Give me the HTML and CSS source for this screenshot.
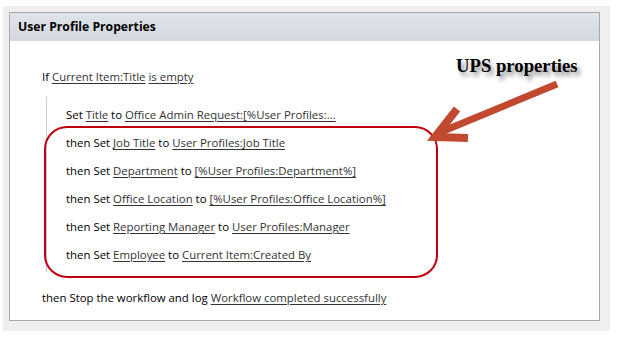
FILE: index.html
```html
<!DOCTYPE html>
<html>
<head>
<meta charset="utf-8">
<link rel="stylesheet" href="styles.css">
</head>
<body>
<div class="frame">
  <div class="panel">
    <div class="header">User Profile Properties</div>
    <div class="content">
      <div class="row">If <a>Current Item:Title</a> <a>is empty</a></div>
      <div class="block">
        <div class="row">Set <a>Title</a> to <a>Office Admin Request:[%User Profiles:...</a></div>
        <div class="row">then Set <a>Job Title</a> to <a>User Profiles:Job Title</a></div>
        <div class="row">then Set <a>Department</a> to <a>[%User Profiles:Department%]</a></div>
        <div class="row">then Set <a>Office Location</a> to <a>[%User Profiles:Office Location%]</a></div>
        <div class="row">then Set <a>Reporting Manager</a> to <a>User Profiles:Manager</a></div>
        <div class="row">then Set <a>Employee</a> to <a>Current Item:Created By</a></div>
      </div>
      <div class="row stop">then Stop the workflow and log <a>Workflow completed successfully</a></div>
    </div>
  </div>
</div>
<svg class="annot" width="617" height="338" viewBox="0 0 617 338">
  <rect x="45" y="127" width="392" height="150" rx="22" ry="22" fill="none" stroke="#c00010" stroke-width="2"/>
  <line x1="557" y1="84" x2="441" y2="132" stroke="#c0492f" stroke-width="7"/>
  <polyline points="457,109 435,137 468,138" fill="none" stroke="#c0492f" stroke-width="8" stroke-linejoin="miter"/>
</svg>
<div class="label">UPS properties</div>
</body>
</html>
```
FILE: styles.css
```css
html, body {
  margin: 0;
  padding: 0;
  background: #ffffff;
}
body {
  position: relative;
  width: 617px;
  height: 338px;
  overflow: hidden;
  font-family: "Open Sans", "Noto Sans", sans-serif;
}
.frame {
  margin: 6px 7px 0 3px;
  padding: 6px 10px 10px 6px;
  background: #efefef;
}
.panel {
  border: 1px solid #a8a8a8;
  background: #ffffff;
  height: 307px;
}
.header {
  height: 28px;
  line-height: 28px;
  padding-left: 8px;
  background: linear-gradient(#dfe3ea, #d3d8df);
  font-family: "Open Sans", sans-serif;
  font-weight: 700;
  font-size: 12.2px;
  color: #000;
}
.content {
  padding: 22px 0 0 32px;
  font-size: 11.4px;
  color: #000;
}
.row {
  height: 28px;
  line-height: 28px;
  white-space: nowrap;
}
.row a {
  color: #333;
  text-decoration: underline;
  text-underline-offset: 2px;
}
.block {
  margin: 6px 0 0 4px;
  padding: 4px 0 3px 19px;
  border-left: 1px solid #c8c8da;
}
.stop {
  margin-top: 12px;
}
.annot {
  position: absolute;
  left: 0;
  top: 0;
}
.label {
  position: absolute;
  left: 456px;
  top: 55px;
  font-family: "Liberation Serif", serif;
  font-weight: 700;
  font-size: 18.7px;
  color: #000;
  text-shadow: 3px 4px 4px rgba(0,0,0,0.45);
}
```
